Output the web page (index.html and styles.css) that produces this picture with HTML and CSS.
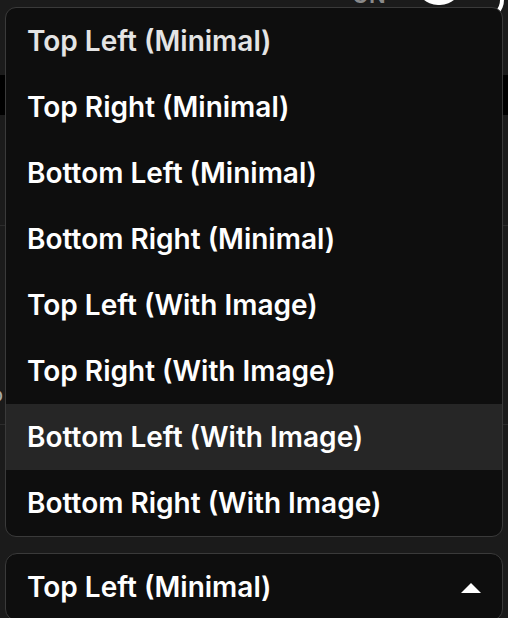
FILE: index.html
```html
<!DOCTYPE html>
<html lang="en">
<head>
    <meta charset="UTF-8">
    <meta name="viewport" content="width=device-width, initial-scale=1.0">
    <title>Notification Position</title>
    <link rel="stylesheet" href="styles.css">
</head>
<body>
    <div class="page">
        <div class="setting-row">
            <span class="state">ON</span>
            <span class="knob"></span>
            <span class="ring"></span>
        </div>
        <div class="band"></div>
        <div class="rule"></div>
        <div class="rule low"><span class="peek">o</span></div>

        <div class="field">
            <ul class="menu">
                <li class="option">Top Left (Minimal)</li>
                <li class="option">Top Right (Minimal)</li>
                <li class="option">Bottom Left (Minimal)</li>
                <li class="option">Bottom Right (Minimal)</li>
                <li class="option">Top Left (With Image)</li>
                <li class="option">Top Right (With Image)</li>
                <li class="option hover">Bottom Left (With Image)</li>
                <li class="option">Bottom Right (With Image)</li>
            </ul>
            <div class="select">
                <span>Top Left (Minimal)</span>
                <svg class="caret" width="20" height="10" viewBox="0 0 20 10"><path d="M10 0 L20 10 L0 10 Z" fill="#fff"/></svg>
            </div>
        </div>
    </div>
</body>
</html>
```

FILE: styles.css
```css
* {
    box-sizing: border-box;
}
body {
    margin: 0;
    background: #1b1b1b;
    color: #fff;
    font-family: Inter, "Noto Sans", sans-serif;
    height: 618px;
    overflow: hidden;
}
.page {
    position: relative;
    height: 618px;
}
.setting-row {
    display: flex;
    height: 8px;
    padding-left: 352px;
}
.state {
    color: #8a8a8a;
    font-size: 22px;
    font-weight: 600;
    margin-top: -15px;
    line-height: 20px;
    height: 20px;
}
.knob {
    width: 46px;
    height: 30px;
    margin-left: 30px;
    margin-top: -25px;
    border-radius: 0 0 22px 22px;
    background: #fff;
}
.ring {
    width: 40px;
    height: 40px;
    margin-left: 2px;
    margin-top: -20px;
    border: 4px solid #fff;
    border-color: transparent #fff transparent transparent;
    border-radius: 50%;
}
.band {
    margin-top: 67px;
    height: 40px;
    background: #000;
}
.rule {
    margin-top: 110px;
    border-top: 1px solid #2c2c2c;
    height: 1px;
}
.rule.low {
    margin-top: 198px;
    position: relative;
}
.peek {
    position: absolute;
    left: -10px;
    top: -44px;
    font-size: 22px;
    color: #aaa;
}
.field {
    position: absolute;
    left: 5px;
    right: 5px;
    bottom: -3px;
}
.menu {
    position: absolute;
    left: 0;
    right: 0;
    bottom: 84px;
    margin: 0;
    padding: 0;
    list-style: none;
    background: #0e0e0e;
    border: 1px solid #3a3a3a;
    border-radius: 11px;
    overflow: hidden;
}
.option {
    height: 66px;
    display: flex;
    align-items: center;
    padding-left: 21px;
    font-size: 28px;
    font-weight: 600;
}
.option:first-child {
    color: #e4e4e4;
}
.option.hover {
    background: #262626;
}
.select {
    height: 68px;
    display: flex;
    align-items: center;
    justify-content: space-between;
    padding: 0 21px 0 21px;
    background: #0e0e0e;
    border: 1px solid #3a3a3a;
    border-radius: 12px;
    font-size: 28px;
    font-weight: 600;
}
.caret {
    margin-top: 2px;
}
```
